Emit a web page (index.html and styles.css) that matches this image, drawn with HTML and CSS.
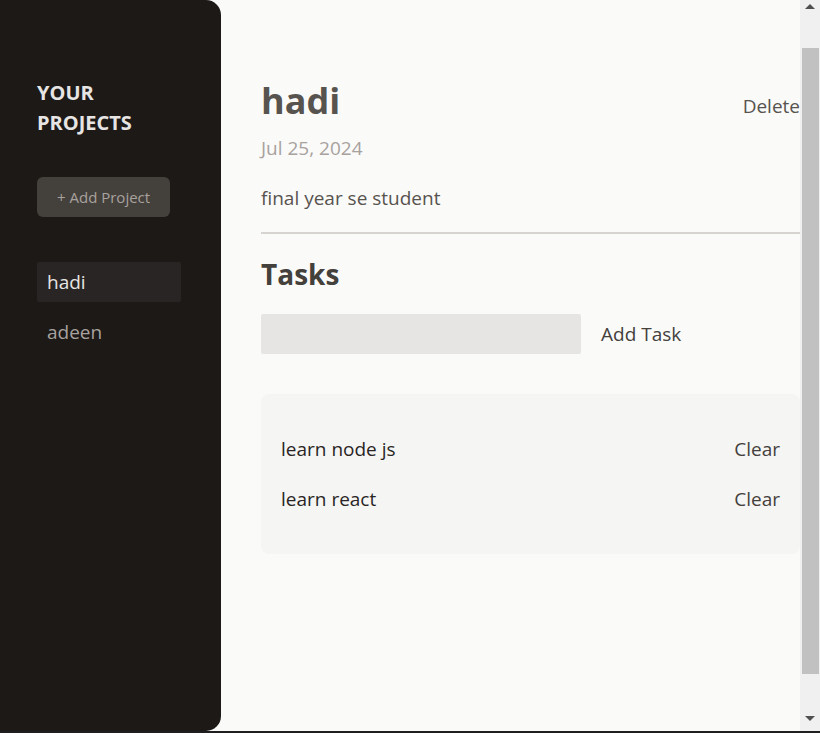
FILE: index.html
```html
<!DOCTYPE html>
<html lang="en">
<head>
<meta charset="utf-8">
<title>Project Manager</title>
<link rel="stylesheet" href="styles.css">
</head>
<body>
<div class="window">
  <div class="app">
    <aside class="sidebar">
      <h2 class="sidebar-title">Your Projects</h2>
      <div>
        <button class="add-project">+ Add Project</button>
      </div>
      <ul class="project-list">
        <li><button class="project-item active">hadi</button></li>
        <li><button class="project-item">adeen</button></li>
      </ul>
    </aside>
    <main class="project">
      <header class="project-header">
        <div class="title-row">
          <h1 class="project-title">hadi</h1>
          <button class="text-btn delete">Delete</button>
        </div>
        <p class="project-date">Jul 25, 2024</p>
        <p class="project-desc">final year se student</p>
      </header>
      <section class="tasks">
        <h2 class="tasks-title">Tasks</h2>
        <div class="new-task">
          <input class="task-input" type="text">
          <button class="text-btn add-task">Add Task</button>
        </div>
        <ul class="task-list">
          <li class="task"><span>learn node js</span><button class="text-btn clear">Clear</button></li>
          <li class="task"><span>learn react</span><button class="text-btn clear">Clear</button></li>
        </ul>
      </section>
    </main>
    <div class="scrollbar" aria-hidden="true">
      <div class="arrow up"></div>
      <div class="track"><div class="thumb"></div></div>
      <div class="arrow down"></div>
    </div>
  </div>
  <div class="bottom-edge"></div>
</div>
</body>
</html>
```

FILE: styles.css
```css
* { box-sizing: border-box; }
html, body { margin: 0; padding: 0; }
body {
  font-family: "Open Sans", "Noto Sans", sans-serif;
  background: #fafaf9;
  width: 820px;
  height: 733px;
  overflow: hidden;
}
button, input {
  font-family: inherit;
  border: none;
  background: none;
  margin: 0;
  padding: 0;
  cursor: pointer;
}
ul { list-style: none; margin: 0; padding: 0; }
h1, h2, p { margin: 0; }

.window { display: flex; flex-direction: column; height: 733px; }
.app { display: flex; height: 731px; }
.bottom-edge { height: 2px; background: #1f1f1f; }

/* Sidebar */
.sidebar {
  width: 221px;
  flex: none;
  background: #1c1917;
  color: #fafaf9;
  padding: 78px 40px 0 37px;
  border-radius: 0 15px 15px 0;
}
.sidebar-title {
  font-size: 20px;
  line-height: 30px;
  font-weight: 700;
  text-transform: uppercase;
  color: #e7e5e4;
  margin-bottom: 39px;
}
.add-project {
  height: 40px;
  padding: 0 20px;
  border-radius: 6px;
  background: #44403c;
  color: #a8a29e;
  font-size: 15px;
  line-height: 20px;
}
.project-list {
  margin-top: 45px;
  display: flex;
  flex-direction: column;
  gap: 10px;
}
.project-item {
  display: block;
  width: 100%;
  text-align: left;
  height: 40px;
  padding: 0 10px;
  border-radius: 2px;
  font-size: 19px;
  line-height: 30px;
  color: #a8a29e;
}
.project-item.active { background: #292524; color: #e7e5e4; }

/* Main */
.project {
  flex: 1;
  margin-left: 40px;
  padding-top: 78px;
  color: #57534e;
}
.title-row { display: flex; justify-content: space-between; align-items: center; }
.project-title {
  font-size: 36px;
  line-height: 45px;
  font-weight: 700;
  color: #57534e;
  margin-bottom: 10px;
}
.text-btn { font-size: 19px; line-height: 30px; }
.delete { color: #57534e; }
.project-date { font-size: 19px; line-height: 30px; color: #a8a29e; margin-bottom: 20px; }
.project-desc { font-size: 19px; line-height: 30px; color: #57534e; }
.project-header {
  padding-bottom: 19px;
  border-bottom: 2px solid #d6d3d1;
  margin-bottom: 20px;
}
.tasks-title {
  font-size: 28px;
  line-height: 40px;
  font-weight: 700;
  color: #44403c;
  margin-bottom: 20px;
}
.new-task { display: flex; align-items: center; gap: 20px; }
.task-input {
  width: 320px;
  height: 40px;
  background: #e7e5e4;
  border-radius: 2px;
  padding: 5px 10px;
  cursor: text;
}
.add-task { color: #44403c; }
.task-list {
  margin-top: 40px;
  padding: 20px;
  background: #f5f5f4;
  border-radius: 8px;
}
.task {
  display: flex;
  justify-content: space-between;
  margin: 20px 0;
  font-size: 19px;
  line-height: 30px;
  color: #292524;
}
.clear { color: #44403c; }

/* Scrollbar column */
.scrollbar {
  width: 20px;
  flex: none;
  background: #f0f0f0;
  display: flex;
  flex-direction: column;
  align-items: center;
}
.arrow { width: 0; height: 0; border-left: 5px solid transparent; border-right: 5px solid transparent; }
.arrow.up { border-bottom: 5px solid #505050; margin: 4px 0 8px; }
.arrow.down { border-top: 5px solid #505050; margin: 8px 0 10px; }
.track { flex: 1; width: 100%; padding-top: 31px; padding-bottom: 31px; }
.thumb { margin-left: 2px; width: 17px; height: 626px; background: #c1c1c1; }
```
